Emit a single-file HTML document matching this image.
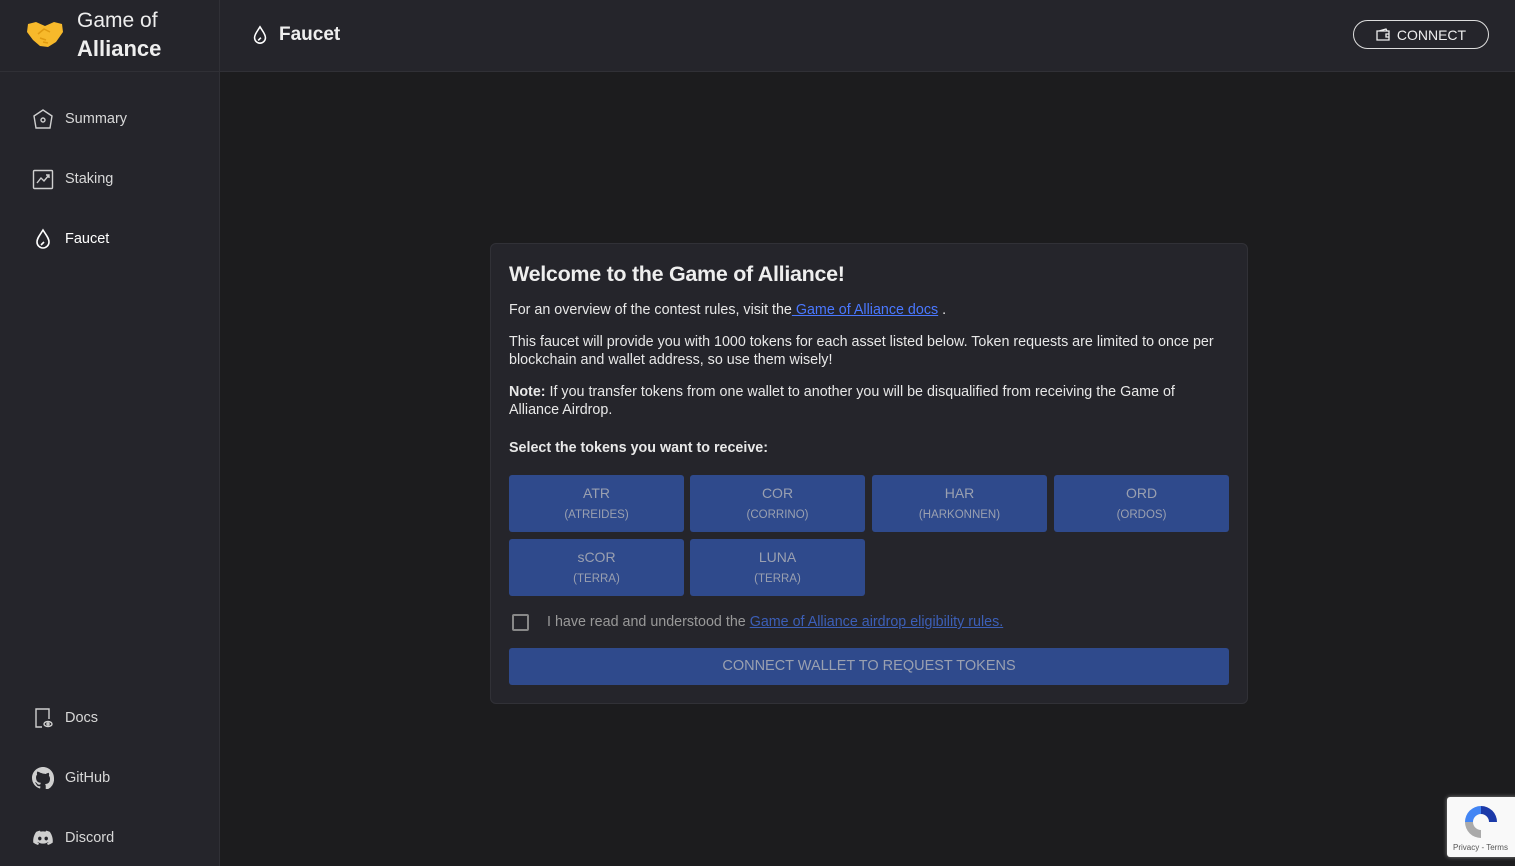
<!DOCTYPE html>
<html><head><meta charset="utf-8"><style>
*{box-sizing:border-box;margin:0;padding:0}
body{width:1515px;height:866px;overflow:hidden;background:#1c1c1e;font-family:"Liberation Sans",sans-serif;color:#e6e6e6;position:relative}
.side{position:absolute;left:0;top:0;width:220px;height:866px;background:#25252b;border-right:1px solid #303036}
.top{position:absolute;left:220px;top:0;right:0;height:72px;background:#25252b;border-bottom:1px solid #303036}
.logo{position:absolute;left:0;top:0;width:220px;height:72px;border-bottom:1px solid #303036}
.logo .t{position:absolute;left:77px;top:7px;font-size:21px;line-height:28px;color:#eee}
.nav{position:absolute;left:32px;display:flex;align-items:center;font-size:14.5px;color:#d8d8d8}
.nav svg{margin-right:11px}
.card{position:absolute;left:490px;top:243px;width:758px;height:461px;background:#25252b;border:1px solid #313137;border-radius:6px;padding:18px 18px}
.card h1{font-size:21.5px;font-weight:bold;color:#eee;margin-bottom:14px;letter-spacing:-.3px}
.card p{font-size:14.3px;line-height:18px;margin-bottom:14px;color:#e8e8e8}
a{color:#4a78ff;text-decoration:underline}
.tok{position:absolute;width:175px;height:57px;background:#2f4a8c;border-radius:3px;color:#9aa0b0;text-align:center;font-size:14px}
.tok div{margin-top:10px}
.tok small{display:block;font-size:11.5px;margin-top:8px}
</style></head><body>
<div class="side">
<div class="logo">
<svg style="position:absolute;left:26px;top:20px" width="38" height="28" viewBox="0 0 38 28"><path d="M2 4 L10 2 L19 6 L28 2 L36 4 L37 12 L30 22 L22 27 L14 26 L7 20 L1 12Z" fill="#f7b92b"/><path d="M12 14 L18 9 L24 12 M14 18 L20 20 M17 22 L22 23" stroke="#e09a10" stroke-width="1.5" fill="none"/></svg>
<div class="t">Game of<br><b style="font-size:22px">Alliance</b></div>
</div>
<div class="nav" style="top:108px"><svg width="22" height="22" viewBox="0 0 22 22" fill="none" stroke="#cfcfcf" stroke-width="1.4"><path d="M11 2 L20 8 L18 20 H4 L2 8Z"/><circle cx="11" cy="12" r="2"/></svg>Summary</div>
<div class="nav" style="top:168px"><svg width="22" height="22" viewBox="0 0 22 22" fill="none" stroke="#cfcfcf" stroke-width="1.4"><rect x="1.5" y="2.5" width="19" height="18" rx="1"/><path d="M5 15 L9 10 L12 13 L17 7 M14 7 H17 V10"/></svg>Staking</div>
<div class="nav" style="top:228px;color:#fff"><svg width="22" height="22" viewBox="0 0 22 22" fill="none" stroke="#fff" stroke-width="1.6"><path d="M11 2 C8 7 5 10 5 14 A6 6 0 0 0 17 14 C17 10 14 7 11 2Z"/><path d="M9 17 L12 14"/></svg>Faucet</div>
<div class="nav" style="top:707px"><svg width="22" height="22" viewBox="0 0 22 22" fill="none" stroke="#cfcfcf" stroke-width="1.4"><path d="M10 20 H4 V2 H17 V12"/><ellipse cx="16" cy="17" rx="4" ry="2.5"/><circle cx="16" cy="17" r="1"/></svg>Docs</div>
<div class="nav" style="top:767px"><svg width="22" height="22" viewBox="0 0 16 16" fill="#cfcfcf"><path d="M8 0C3.58 0 0 3.58 0 8c0 3.54 2.29 6.53 5.47 7.59.4.07.55-.17.55-.38v-1.33c-2.22.48-2.69-1.07-2.69-1.07-.36-.92-.89-1.17-.89-1.17-.73-.5.06-.49.06-.49.8.06 1.23.83 1.23.83.71 1.22 1.87.87 2.33.66.07-.52.28-.87.51-1.07-1.78-.2-3.64-.89-3.64-3.95 0-.87.31-1.59.82-2.15-.08-.2-.36-1.02.08-2.12 0 0 .67-.21 2.2.82A7.6 7.6 0 0 1 8 4.8c.68 0 1.36.09 2 .27 1.53-1.04 2.2-.82 2.2-.82.44 1.1.16 1.92.08 2.12.51.56.82 1.27.82 2.15 0 3.07-1.87 3.75-3.65 3.95.29.25.54.73.54 1.48v2.2c0 .21.15.46.55.38A8 8 0 0 0 16 8c0-4.42-3.58-8-8-8Z"/></svg>GitHub</div>
<div class="nav" style="top:827px"><svg width="22" height="22" viewBox="0 0 24 24" fill="#cfcfcf"><path d="M19.5 5.3A17 17 0 0 0 15.3 4l-.5 1a16 16 0 0 0-5.6 0l-.5-1a17 17 0 0 0-4.2 1.3C1.8 9.3 1 13.2 1.4 17a17 17 0 0 0 5.2 2.6l1.1-1.8a11 11 0 0 1-1.7-.8l.4-.3a12 12 0 0 0 11.2 0l.4.3-1.7.8 1.1 1.8a17 17 0 0 0 5.2-2.6c.5-4.4-.8-8.3-3.1-11.7ZM8.5 14.7c-1 0-1.9-.9-1.9-2.1s.8-2.1 1.9-2.1 1.9.9 1.9 2.1-.8 2.1-1.9 2.1Zm7 0c-1 0-1.9-.9-1.900-2.1s.8-2.1 1.9-2.1 1.9.9 1.9 2.1-.8 2.1-1.9 2.1Z"/></svg>Discord</div>
</div>
<div class="top">
<div style="position:absolute;left:30px;top:24px;display:flex;align-items:center;font-size:19px;font-weight:bold;color:#eee"><svg width="20" height="22" viewBox="0 0 22 22" fill="none" stroke="#fff" stroke-width="1.7" style="margin-right:9px"><path d="M11 2 C8 7 5 10 5 14 A6 6 0 0 0 17 14 C17 10 14 7 11 2Z"/><path d="M9 17 L12 14"/></svg>Faucet</div>
<div style="position:absolute;right:26px;top:20px;width:136px;height:29px;border:1px solid #ddd;border-radius:15px;display:flex;align-items:center;justify-content:center;font-size:14px;color:#eee"><svg width="15" height="13" viewBox="0 0 15 13" fill="none" stroke="#eee" stroke-width="1.3" style="margin-right:6px"><path d="M1 3 H13 V12 H1Z M3 3 L10 1 L11 3 M10 6 H13 V9 H10Z"/></svg>CONNECT</div>
</div>
<div class="card">
<h1>Welcome to the Game of Alliance!</h1>
<p>For an overview of the contest rules, visit the<a> Game of Alliance docs</a> .</p>
<p>This faucet will provide you with 1000 tokens for each asset listed below. Token requests are limited to once per blockchain and wallet address, so use them wisely!</p>
<p><b>Note:</b> If you transfer tokens from one wallet to another you will be disqualified from receiving the Game of<br>Alliance Airdrop.</p>
<p style="font-weight:bold;margin-top:20px">Select the tokens you want to receive:</p>
</div>
<div class="tok" style="left:509px;top:475px"><div>ATR<small>(ATREIDES)</small></div></div>
<div class="tok" style="left:690px;top:475px"><div>COR<small>(CORRINO)</small></div></div>
<div class="tok" style="left:872px;top:475px"><div>HAR<small>(HARKONNEN)</small></div></div>
<div class="tok" style="left:1054px;top:475px"><div>ORD<small>(ORDOS)</small></div></div>
<div class="tok" style="left:509px;top:539px"><div>sCOR<small>(TERRA)</small></div></div>
<div class="tok" style="left:690px;top:539px"><div>LUNA<small>(TERRA)</small></div></div>
<div style="position:absolute;left:512px;top:614px;width:17px;height:17px;border:2px solid #888;border-radius:2px"></div>
<div style="position:absolute;left:547px;top:614px;font-size:14.3px;color:#999">I have read and understood the <a style="color:#3c5fb8">Game of Alliance airdrop eligibility rules.</a></div>
<div style="position:absolute;left:509px;top:648px;width:720px;height:37px;background:#2f4a8c;border-radius:3px;color:#9aa0b0;font-size:14.5px;text-align:center;line-height:37px">CONNECT WALLET TO REQUEST TOKENS</div>
<div style="position:absolute;left:1447px;top:797px;width:70px;height:60px;background:#f9f9f9;border-radius:3px 0 0 3px;box-shadow:0 0 4px #888">
<svg style="position:absolute;left:16px;top:7px" width="36" height="36" viewBox="0 0 36 36"><path d="M18 2 A16 16 0 0 1 34 18 H26 A8 8 0 0 0 18 10Z" fill="#1c3aa9"/><path d="M2 18 A16 16 0 0 1 18 2 V10 A8 8 0 0 0 10 18Z" fill="#4285f4"/><path d="M18 34 A16 16 0 0 1 2 18 H10 A8 8 0 0 0 18 26Z" fill="#aaa"/></svg>
<div style="position:absolute;left:6px;top:46px;font-size:8px;color:#555">Privacy - Terms</div></div>
</body></html>
